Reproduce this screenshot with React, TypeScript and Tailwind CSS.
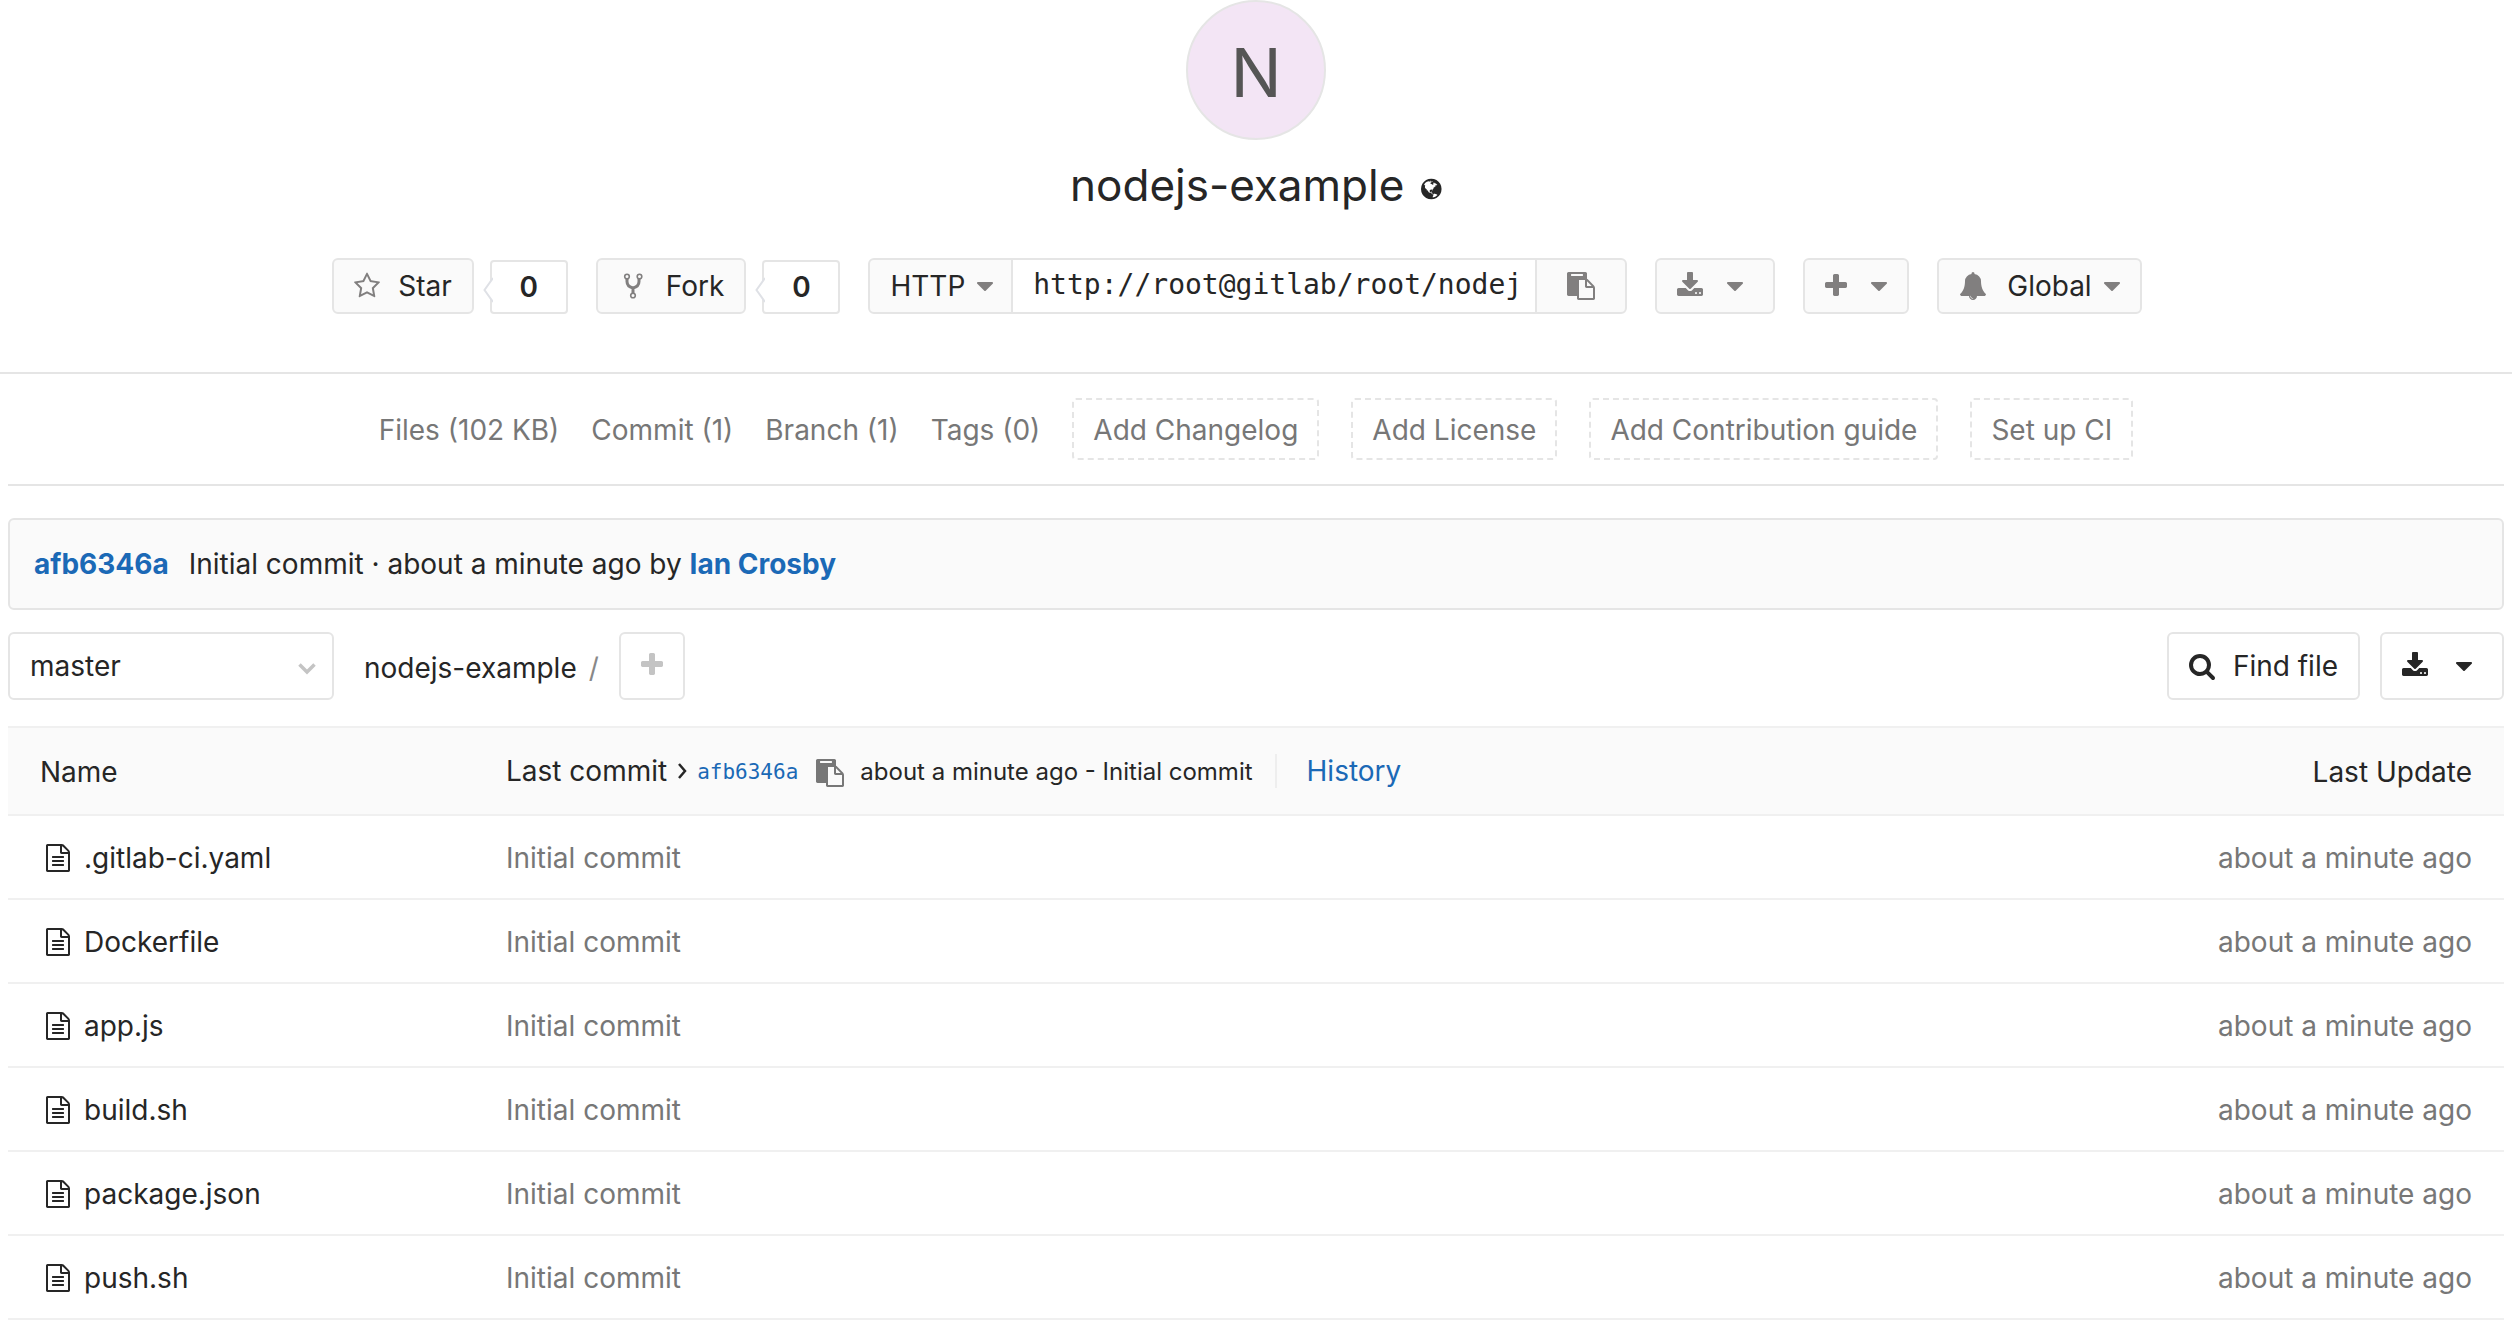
import type { ReactNode } from 'react';

type Glyph = { d: string; x: number; w: number };

const glyphs: Record<string, Glyph> = {
  star: {
    x: 64,
    w: 1664,
    d: 'M1201 1004l306-297-422-62-189-382-189 382-422 62 306 297-73 421 378-199 377 199zm527-357q0 22-26 48l-363 354 86 500q1 7 1 20 0 50-41 50-19 0-40-12l-449-236-449 236q-22 12-40 12-21 0-31.5-14.5t-10.5-35.5q0-6 2-20l86-500-364-354q-25-27-25-48 0-37 56-46l502-73 225-455q19-41 49-41t49 41l225 455 502 73q56 9 56 46z',
  },
  download: {
    x: 64,
    w: 1664,
    d: 'M1344 1344q0-26-19-45t-45-19-45 19-19 45 19 45 45 19 45-19 19-45zm256 0q0-26-19-45t-45-19-45 19-19 45 19 45 45 19 45-19 19-45zm128-224v320q0 40-28 68t-68 28h-1472q-40 0-68-28t-28-68v-320q0-40 28-68t68-28h465l135 136q58 56 136 56t136-56l136-136h464q40 0 68 28t28 68zm-325-569q17 41-14 70l-448 448q-18 19-45 19t-45-19l-448-448q-31-29-14-70 17-39 59-39h256v-448q0-26 19-45t45-19h256q26 0 45 19t19 45v448h256q42 0 59 39z',
  },
  plus: {
    x: 192,
    w: 1408,
    d: 'M1600 736v192q0 40-28 68t-68 28h-416v416q0 40-28 68t-68 28h-192q-40 0-68-28t-28-68v-416h-416q-40 0-68-28t-28-68v-192q0-40 28-68t68-28h416v-416q0-40 28-68t68-28h192q40 0 68 28t28 68v416h416q40 0 68 28t28 68z',
  },
  bell: {
    x: 0,
    w: 1792,
    d: 'M912 1696q0-16-16-16-59 0-101.5-42.5t-42.5-101.5q0-16-16-16t-16 16q0 73 51.5 124.5t124.5 51.5q16 0 16-16zm816-288q0 52-38 90t-90 38h-448q0 106-75 181t-181 75-181-75-75-181h-448q-52 0-90-38t-38-90q50-42 91-88t85-119.5 74.5-158.5 50-206 19.5-260q0-152 117-282.5t307-158.5q-8-19-8-39 0-40 28-68t68-28 68 28 28 68q0 20-8 39 190 28 307 158.5t117 282.5q0 139 19.5 260t50 206 74.5 158.5 85 119.5 91 88z',
  },
  caret: {
    x: 384,
    w: 1024,
    d: 'M1408 704q0 26-19 45l-448 448q-19 19-45 19t-45-19l-448-448q-19-19-19-45t19-45 45-19h896q26 0 45 19t19 45z',
  },
  paste: {
    x: 0,
    w: 1792,
    d: 'M768 1664h896v-640h-416q-40 0-68-28t-28-68v-416h-384v1152zm256-1440v-64q0-13-9.5-22.5t-22.5-9.5h-704q-13 0-22.5 9.5t-9.5 22.5v64q0 13 9.5 22.5t22.5 9.5h704q13 0 22.5-9.5t9.5-22.5zm256 672h299l-299-299v299zm512 128v672q0 40-28 68t-68 28h-960q-40 0-68-28t-28-68v-160h-544q-40 0-68-28t-28-68v-1344q0-40 28-68t68-28h1088q40 0 68 28t28 68v328q21 13 36 28l408 408q28 28 48 76t20 88z',
  },
  search: {
    x: 64,
    w: 1664,
    d: 'M1216 832q0-185-131.5-316.5t-316.5-131.5-316.5 131.5-131.5 316.5 131.5 316.5 316.5 131.5 316.5-131.5 131.5-316.5zm512 832q0 52-38 90t-90 38q-54 0-90-38l-343-342q-179 124-399 124-143 0-273.5-55.5t-225-150-150-225-55.5-273.5 55.5-273.5 150-225 225-150 273.5-55.5 273.5 55.5 225 150 150 225 55.5 273.5q0 220-124 399l343 343q37 37 37 90z',
  },
  file: {
    x: 128,
    w: 1536,
    d: 'M1596 380q28 28 48 76t20 88v1152q0 40-28 68t-68 28h-1344q-40 0-68-28t-28-68v-1600q0-40 28-68t68-28h896q40 0 88 20t76 48zm-444-244v376h376q-10-29-22-41l-313-313q-12-12-41-22zm384 1528v-1024h-416q-40 0-68-28t-28-68v-416h-768v1536h1280zm-1024-864q0-14 9-23t23-9h704q14 0 23 9t9 23v64q0 14-9 23t-23 9h-704q-14 0-23-9t-9-23v-64zm736 224q14 0 23 9t9 23v64q0 14-9 23t-23 9h-704q-14 0-23-9t-9-23v-64q0-14 9-23t23-9h704zm0 256q14 0 23 9t9 23v64q0 14-9 23t-23 9h-704q-14 0-23-9t-9-23v-64q0-14 9-23t23-9h704z',
  },
  globe: {
    x: 128,
    w: 1536,
    d: 'M896 128q209 0 385.5 103t279.5 279.5 103 385.5-103 385.5-279.5 279.5-385.5 103-385.5-103-279.5-279.5-103-385.5 103-385.5 279.5-279.5 385.5-103zm274 521q-2 1-9.5 9.5t-13.5 9.5q2 0 4.5-5t5-11 3.5-7q6-7 22-15 14-6 52-12 34-8 51 11-2-2 9.5-13t14.5-12q3-2 15-4.5t15-7.5l2-22q-12 1-17.5-7t-6.5-21q0 2-6 8 0-7-4.5-8t-11.5 1-9 1q-10-3-15-7.5t-8-16.5-4-15q-2-5-9.5-11t-9.5-10q-1-2-2.5-5.5t-3-6.5-4-5.5-5.5-2.5-7 5-7.5 10-4.5 5q-3-2-6-1.5t-4.5 1-4.5 3-5 3.5q-3 2-8.5 3t-8.5 2q15-5-1-11-10-4-16-3 9-4 7.5-12t-8.5-14h5q-1-4-8.5-8.5t-17.5-8.5-13-6q-8-5-34-9.5t-33-.5q-5 6-4.5 10.5t4 14 3.5 12.5q1 6-5.5 13t-6.5 12q0 7 14 15.5t10 21.5q-3 8-16 16t-16 12q-5 8-1.5 18.5t10.5 16.5q2 2 1.5 4t-3.5 4.5-5.5 4-6.5 3.5l-3 2q-11 5-20.5-6t-13.5-26q-7-25-16-30-23-8-29 1-5-13-41-26-25-9-58-4 6-1 0-15-7-15-19-12 3-6 4-17.5t1-13.5q3-13 12-23 1-1 7-8.5t9.5-13.5.5-6q35 4 50-11 5-5 11.5-17t10.5-17q9-6 14-5.5t14.5 5.5 14.5 5q14 1 15.5-11t-7.5-20q12 1 3-17-4-7-8-9-12-4-27 5-8 4 2 8-1-1-9.5 10.5t-16.5 17.5-16-5q-1-1-5.5-13.5t-9.5-13.5q-8 0-16 15 3-8-11-15t-24-8q19-12-8-27-7-4-20.5-5t-19.5 4q-5 7-5.5 11.5t5 8 10.5 5.5 11.5 4 8.5 3q14 10 8 14-2 1-8.5 3.5t-11.5 4.5-6 4q-3 4 0 14t-2 14q-5-5-9-17.5t-7-16.5q7 9-25 6l-10-1q-4 0-16 2t-20.5 1-13.5-8q-4-8 0-20 1-4 4-2-4-3-11-9.5t-10-8.5q-46 15-94 41 6 1 12-1 5-2 13-6.5t10-5.5q34-14 42-7l5-5q14 16 20 25-7-4-30-1-20 6-22 12 7 12 5 18-4-3-11.5-10t-14.5-11-15-5q-16 0-22 1-146 80-235 222 7 7 12 8 4 1 5 9t2.5 11 11.5-3q9 8 3 19 1-1 44 27 19 17 21 21 3 11-10 18-1-2-9-9t-9-4q-3 5 .5 18.5t10.5 12.5q-7 0-9.5 16t-2.5 35.5-1 23.5l2 1q-3 12 5.5 34.5t21.5 19.5q-13 3 20 43 6 8 8 9 3 2 12 7.5t15 10 10 10.5q4 5 10 22.5t14 23.5q-2 6 9.5 20t10.5 23q-1 0-2.5 1t-2.5 1q3 7 15.5 14t15.5 13q1 3 2 10t3 11 8 2q2-20-24-62-15-25-17-29-3-5-5.5-15.5t-4.5-14.5q2 0 6 1.5t8.5 3.5 7.5 4 2 3q-3 7 2 17.5t12 18.5 17 19 12 13q6 6 14 19.5t0 13.5q9 0 20 10t17 20q5 8 8 26t5 24q2 7 8.5 13.5t12.5 9.5l16 8 13 7q5 2 18.5 10.5t21.5 11.5q10 4 16 4t14.5-2.5 13.5-3.5q15-2 29 15t21 21q36 19 55 11-2 1 .5 7.5t8 15.5 9 14.5 5.5 8.5q5 6 18 15t18 15q6-4 7-9-3 8 7 20t18 10q14-3 14-32-31 15-49-18 0-1-2.5-5.5t-4-8.5-2.5-8.5 0-7.5 5-3q9 0 10-3.5t-2-12.5-4-13q-1-8-11-20t-12-15q-5 9-16 8t-16-9q0 1-1.5 5.5t-1.5 6.5q-13 0-15-1 1-3 2.5-17.5t3.5-22.5q1-4 5.5-12t7.5-14.5 4-12.5-4.5-9.5-17.5-2.5q-19 1-26 20-1 3-3 10.5t-5 11.5-9 7q-7 3-24 2t-24-5q-13-8-22.5-29t-9.5-37q0-10 2.5-26.5t3-25-5.5-24.5q3-2 9-9.5t10-10.5q2-1 4.5-1.5t4.5 0 4-1.5 3-6q-1-1-4-3-3-3-4-3 7 3 28.5-1.5t27.5 1.5q15 11 22-2 0-1-2.5-9.5t-.5-13.5q5 27 29 9 3 3 15.5 5t17.5 5q3 2 7 5.5t5.5 4.5 5-.5 8.5-6.5q10 14 12 24 11 40 19 44 7 3 11 2t4.5-9.5 0-14-1.5-12.5l-1-8v-18l-1-8q-15-3-18.5-12t1.5-18.5 15-18.5q1-1 8-3.5t15.5-6.5 12.5-8q21-19 15-35 7 0 11-9-1 0-5-3t-7.5-5-4.5-2q9-5 2-16 5-3 7.5-11t7.5-10q9 12 21 2 7-8 1-16 5-7 20.5-10.5t18.5-9.5q7 2 8-2t1-12 3-12q4-5 15-9t13-5l17-11q3-4 0-4 18 2 31-11 10-11-6-20 3-6-3-9.5t-15-5.5q3-1 11.5-.5t10.5-1.5q15-10-7-16-17-5-43 12zm-163 877q206-36 351-189-3-3-12.5-4.5t-12.5-3.5q-18-7-24-8 1-7-2.5-13t-8-9-12.5-8-11-7q-2-2-7-6t-7-5.5-7.5-4.5-8.5-2-10 1l-3 1q-3 1-5.5 2.5t-5.5 3-4 3 0 2.5q-21-17-36-22-5-1-11-5.5t-10.5-7-10-1.5-11.5 7q-5 5-6 15t-2 13q-7-5 0-17.5t2-18.5q-3-6-10.5-4.5t-12 4.5-11.5 8.5-9 6.5-8.5 5.5-8.5 7.5q-3 4-6 12t-5 11q-2-4-11.5-6.5t-9.5-5.5q2 10 4 35t5 38q7 31-12 48-27 25-29 40-4 22 12 26 0 7-8 20.5t-7 21.5q0 6 2 16z',
  },
};

function Icon({ name, className = 'h-7' }: { name: string; className?: string }) {
  const g = glyphs[name];
  return (
    <svg
      viewBox={`${g.x} 0 ${g.w} 1792`}
      className={`${className} w-auto shrink-0 fill-current`}
      aria-hidden="true"
    >
      <path d={g.d} />
    </svg>
  );
}

function ForkIcon() {
  return (
    <svg viewBox="0 0 30 28" className="h-7 w-[30px] shrink-0" fill="none" stroke="currentColor" aria-hidden="true">
      <path d="M9 7v2.500q0 5 6 6.500q6-1.500 6-6.500V7M15 15.500V22" strokeWidth="3" />
      <g strokeWidth="1.600" className="fill-[#fafafa]">
        <circle cx="9" cy="4.500" r="2.300" />
        <circle cx="21.500" cy="4.500" r="2.300" />
        <circle cx="15" cy="23.500" r="2.300" />
      </g>
    </svg>
  );
}

function Button({ label, className, children }: { label?: string; className: string; children: ReactNode }) {
  return (
    <button
      type="button"
      aria-label={label}
      className={`flex shrink-0 items-center rounded-md border-2 border-[#e5e5e5] ${className}`}
    >
      {children}
    </button>
  );
}

function Count({ value }: { value: number }) {
  return (
    <span className="relative ml-4 flex h-[54px] w-[78px] items-center justify-center self-end rounded-sm border-2 border-[#e5e5e5] font-semibold">
      <svg viewBox="0 0 10 26" className="absolute top-[15px] -left-[9px] h-[26px] w-[10px] fill-white" aria-hidden="true">
        <path d="M10 1L1.500 13L10 25" stroke="#dfe1e6" strokeWidth="2" />
      </svg>
      {value}
    </span>
  );
}

const stats = ['Files (102 KB)', 'Commit (1)', 'Branch (1)', 'Tags (0)'];
const additions = ['Add Changelog', 'Add License', 'Add Contribution guide', 'Set up CI'];
const files = ['.gitlab-ci.yaml', 'Dockerfile', 'app.js', 'build.sh', 'package.json', 'push.sh'];

export default function App() {
  return (
    <div className="min-h-screen bg-white font-[Inter,sans-serif] text-[28px] leading-9 text-[#262626]">
      <header className="flex flex-col items-center border-b-2 border-[#e5e5e5] pb-[58px]">
        <div className="flex size-[140px] items-center justify-center rounded-full border-2 border-[#e5e5e5] bg-[#f3e5f5] pt-1 text-[68px] text-[#555]">
          N
        </div>
        <h1 className="mt-5 flex items-center gap-[17px] text-[44px] leading-[50px]">
          nodejs-example
          <Icon name="globe" className="mt-2 h-6" />
        </h1>
        <div className="mt-12 flex gap-7 pr-[38px] text-[#817f7f]">
          <div className="flex text-[#262626]">
            <Button className="h-14 gap-[18px] bg-[#fafafa] px-5">
              <span className="text-[#817f7f]"><Icon name="star" /></span>
              Star
            </Button>
            <Count value={0} />
          </div>
          <div className="flex text-[#262626]">
            <Button className="h-14 gap-[18px] bg-[#fafafa] px-5">
              <span className="text-[#817f7f]"><ForkIcon /></span>
              Fork
            </Button>
            <Count value={0} />
          </div>
          <div className="flex h-14 rounded-md border-2 border-[#e5e5e5] bg-[#fafafa]">
            <button type="button" className="flex items-center gap-3 border-r-2 border-[#e5e5e5] pr-[18px] pl-5">
              <span className="text-[#262626]">HTTP</span>
              <Icon name="caret" />
            </button>
            <input
              aria-label="Project clone URL"
              readOnly
              defaultValue="http://root@gitlab/root/nodej"
              className="w-[522px] bg-white pb-0.5 pl-5 font-['DejaVu_Sans_Mono',monospace] text-[#262626] outline-none"
            />
            <button type="button" aria-label="Copy URL" className="flex w-[90px] items-center justify-center border-l-2 border-[#e5e5e5]">
              <Icon name="paste" />
            </button>
          </div>
          <Button label="Download" className="h-14 gap-6 bg-[#fafafa] pr-[30px] pl-5">
            <Icon name="download" />
            <Icon name="caret" />
          </Button>
          <Button label="Create new" className="h-14 gap-6 bg-[#fafafa] px-5">
            <Icon name="plus" />
            <Icon name="caret" />
          </Button>
          <Button className="h-14 bg-[#fafafa] px-5">
            <Icon name="bell" />
            <span className="mr-3 ml-5 text-[#262626]">Global</span>
            <Icon name="caret" />
          </Button>
        </div>
      </header>

      <main className="mx-2">
        <nav className="flex items-center justify-center gap-8 border-b-2 border-[#e5e5e5] py-6 text-[#777]">
          {stats.map((s) => (
            <a key={s} href="#" className="pt-0.5">{s}</a>
          ))}
          {additions.map((s) => (
            <a key={s} href="#" className="rounded-sm border-2 border-dashed border-[#e5e5e5] px-[19px] pt-3 pb-[10px]">
              {s}
            </a>
          ))}
        </nav>

        <p className="mt-8 flex h-[92px] items-center rounded-md border-2 border-[#e5e5e5] bg-[#fafafa] px-6 whitespace-pre">
          <a href="#" className="mr-5 font-bold text-[#1b69b6]">afb6346a</a>
          {'Initial commit · about a minute ago by '}
          <a href="#" className="font-bold text-[#1b69b6]">Ian Crosby</a>
        </p>

        <div className="mt-[22px] flex h-[68px] items-stretch">
          <div className="relative w-[326px]">
            <select aria-label="Branch" className="size-full appearance-none rounded-md border-2 border-[#e5e5e5] bg-white px-5">
              <option>master</option>
            </select>
            <svg viewBox="0 0 20 14" className="pointer-events-none absolute top-[30px] right-[17px] h-[14px] w-5" fill="none" aria-hidden="true">
              <path d="M2.500 2.500L10 10L17.500 2.500" stroke="#c4c4c4" strokeWidth="3.500" />
            </svg>
          </div>
          <div className="ml-[30px] flex items-center pt-1">
            <a href="#">nodejs-example</a>
            <span className="ml-3 text-[#888]">/</span>
          </div>
          <Button label="Add to tree" className="mr-auto ml-5 bg-white px-5 pb-0.5 text-[#c4c4c4]">
            <Icon name="plus" />
          </Button>
          <Button className="gap-[18px] bg-white px-5">
            <Icon name="search" />
            Find file
          </Button>
          <Button label="Download source" className="ml-5 gap-7 bg-white pr-[30px] pl-5">
            <Icon name="download" />
            <Icon name="caret" />
          </Button>
        </div>

        <table className="mt-[26px] w-full border-separate border-spacing-0 text-left">
          <thead className="bg-[#fafafa]">
            <tr>
              <th scope="col" className="h-[90px] w-[466px] border-y-2 border-[#f0f0f0] px-8 pt-0.5 font-normal">Name</th>
              <th scope="col" className="border-y-2 border-[#f0f0f0] px-8 font-normal">
                <div className="flex items-center">
                  Last commit
                  <svg viewBox="0 0 10 18" className="mx-[10px] h-[18px] w-[10px]" fill="none" aria-hidden="true">
                    <path d="M2 2L8 9L2 16" stroke="currentColor" strokeWidth="2.500" />
                  </svg>
                  <a href="#" className="pt-0.5 font-['DejaVu_Sans_Mono',monospace] text-[21px] text-[#1b69b6]">afb6346a</a>
                  <button type="button" aria-label="Copy commit SHA" className="mr-4 ml-[18px] pt-1 text-[#777]">
                    <Icon name="paste" />
                  </button>
                  <span className="border-r-2 border-[#eee] pt-0.5 pr-[22px] text-[24px] leading-8">about a minute ago - Initial commit</span>
                  <a href="#" className="ml-[30px] text-[#1b69b6]">History</a>
                </div>
              </th>
              <th scope="col" className="border-y-2 border-[#f0f0f0] px-8 pt-0.5 text-right font-normal">Last Update</th>
            </tr>
          </thead>
          <tbody>
            {files.map((f) => (
              <tr key={f}>
                <td className="h-[84px] border-b-2 border-[#f0f0f0] px-8 pt-0.5">
                  <a href="#" className="ml-[6px] flex items-center gap-[14px]">
                    <Icon name="file" />
                    {f}
                  </a>
                </td>
                <td className="border-b-2 border-[#f0f0f0] px-8 pt-0.5 text-[#777]">Initial commit</td>
                <td className="border-b-2 border-[#f0f0f0] px-8 pt-0.5 text-right text-[#777]">about a minute ago</td>
              </tr>
            ))}
          </tbody>
        </table>
      </main>
    </div>
  );
}
